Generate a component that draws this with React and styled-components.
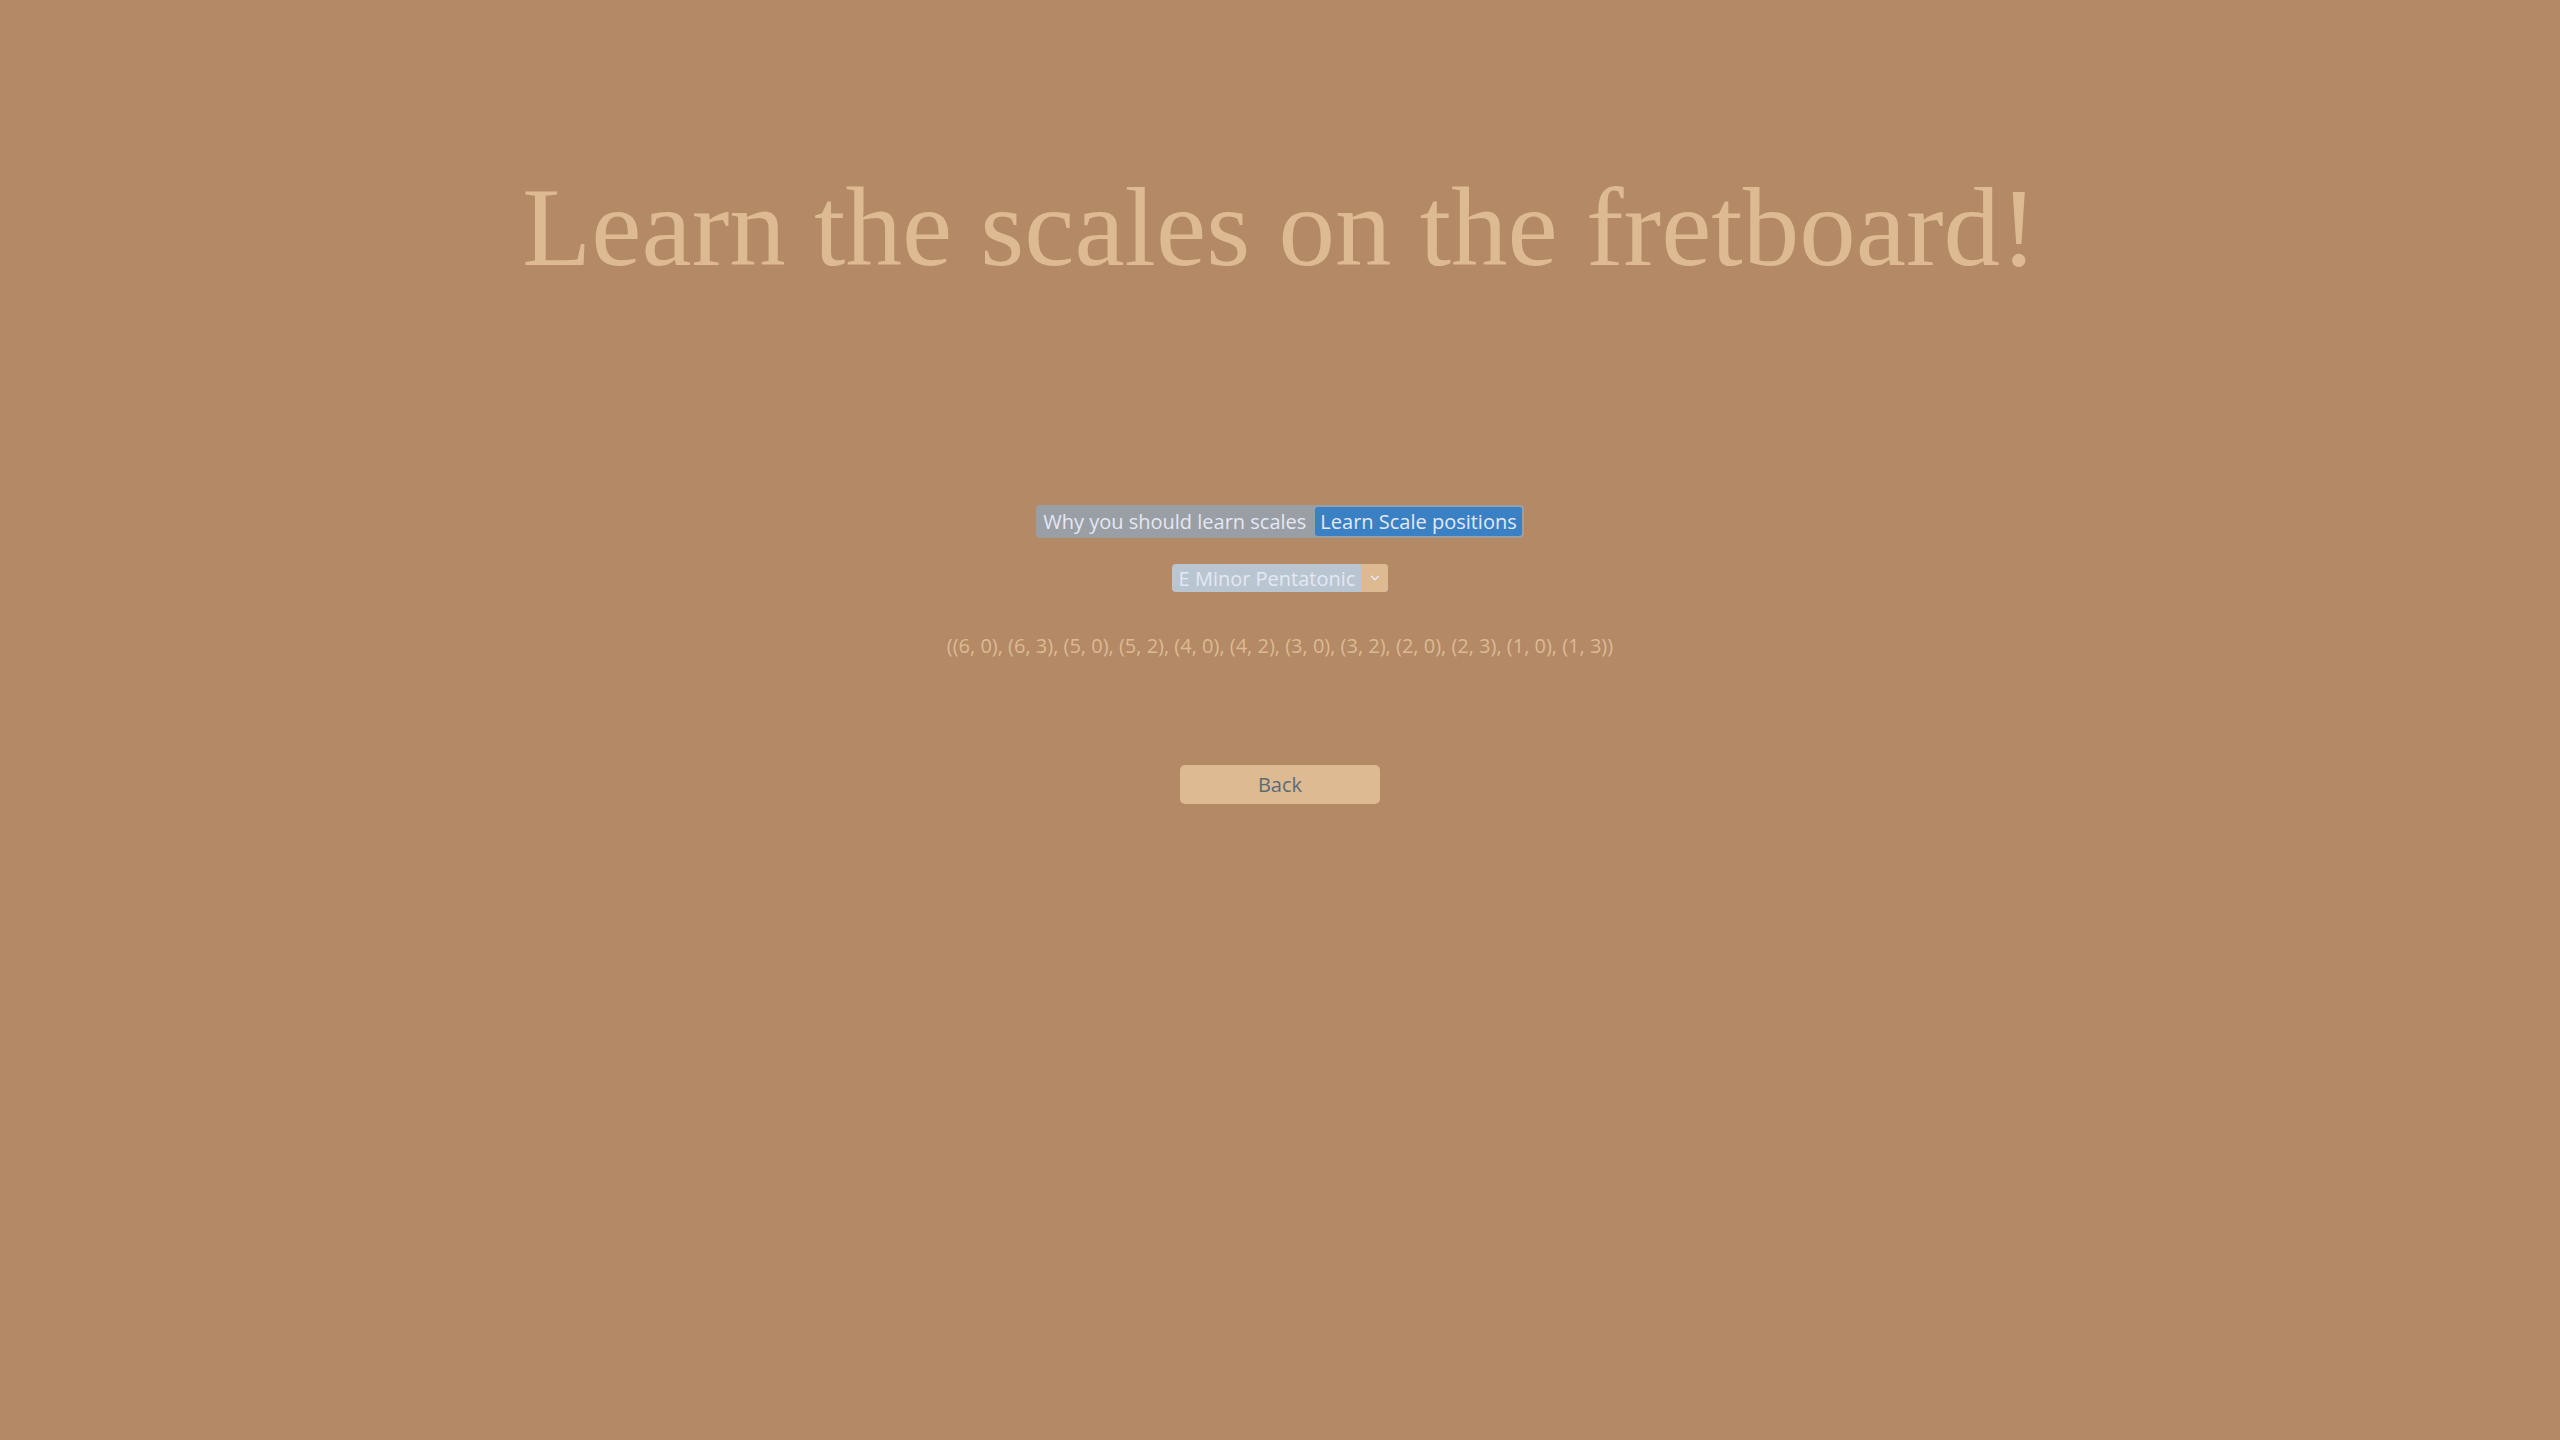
import React, { useState } from "react";
import styled, { createGlobalStyle } from "styled-components";
import { ChevronDown } from "lucide-react";

const GlobalStyle = createGlobalStyle`
  html, body {
    margin: 0;
    padding: 0;
    background: #b38966;
    min-height: 100%;
  }
  body {
    font-family: "Open Sans", "DejaVu Sans", sans-serif;
  }
`;

const Page = styled.div`
  min-height: 1440px;
  display: flex;
  flex-direction: column;
  align-items: center;
  background: #b38966;
`;

const Title = styled.h1`
  margin: 0;
  padding-top: 164px;
  font-family: "Liberation Serif", "DejaVu Serif", serif;
  font-weight: 400;
  font-size: 113px;
  line-height: 126px;
  color: #ddba92;
`;

const Tabs = styled.div`
  margin-top: 215px;
  display: flex;
  gap: 4px;
  padding: 2px;
  background: #9a9ea5;
  border-radius: 4px;
`;

const Tab = styled.button`
  border: none;
  margin: 0;
  padding: 0 5px;
  height: 29px;
  font-family: "Open Sans", "DejaVu Sans", sans-serif;
  font-size: 20px;
  color: #e4e8f4;
  border-radius: 3px;
  background: ${(p) => (p.$active ? "#3a80c4" : "transparent")};
  cursor: pointer;
`;

const Select = styled.div`
  margin-top: 26px;
  display: flex;
  height: 28px;
  border-radius: 4px;
  overflow: hidden;
  background: #b9c5d1;
`;

const SelectValue = styled.span`
  display: flex;
  align-items: center;
  padding: 0 6px 0 7px;
  font-size: 20px;
  color: #e4e8f4;
`;

const SelectArrow = styled.span`
  width: 27px;
  display: flex;
  align-items: center;
  justify-content: center;
  background: #ddba92;
  color: #e4e8f4;
`;

const Positions = styled.p`
  margin: 41px 0 0;
  font-size: 20px;
  line-height: 26px;
  color: #ddba92;
`;

const BackButton = styled.button`
  margin-top: 106px;
  width: 200px;
  height: 39px;
  border: none;
  border-radius: 5px;
  background: #ddba92;
  color: #5c6b75;
  font-family: "Open Sans", "DejaVu Sans", sans-serif;
  font-size: 20px;
  cursor: pointer;
`;

const positions = [
  [6, 0], [6, 3], [5, 0], [5, 2], [4, 0], [4, 2],
  [3, 0], [3, 2], [2, 0], [2, 3], [1, 0], [1, 3],
];

export default function App() {
  const [tab, setTab] = useState(1);
  const text = "(" + positions.map(([s, f]) => `(${s}, ${f})`).join(", ") + ")";

  return (
    <>
      <GlobalStyle />
      <Page>
        <Title>Learn the scales on the fretboard!</Title>
        <Tabs>
          <Tab $active={tab === 0} onClick={() => setTab(0)}>
            Why you should learn scales
          </Tab>
          <Tab $active={tab === 1} onClick={() => setTab(1)}>
            Learn Scale positions
          </Tab>
        </Tabs>
        <Select>
          <SelectValue>E Minor Pentatonic</SelectValue>
          <SelectArrow>
            <ChevronDown size={14} strokeWidth={2.5} />
          </SelectArrow>
        </Select>
        <Positions>{text}</Positions>
        <BackButton>Back</BackButton>
      </Page>
    </>
  );
}
